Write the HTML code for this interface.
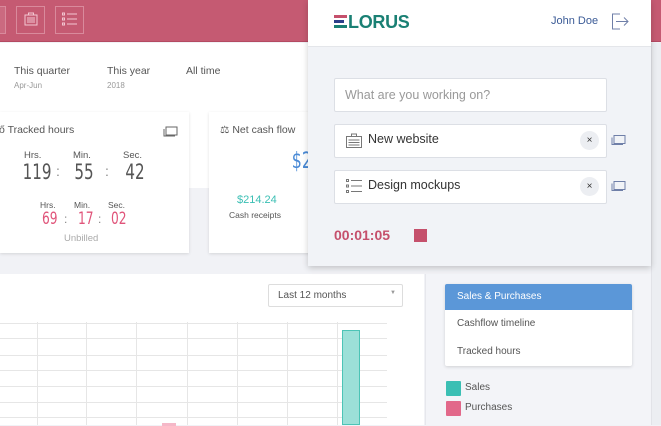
<!DOCTYPE html>
<html><head><meta charset="utf-8"><style>
*{margin:0;padding:0;box-sizing:border-box}
body{width:661px;height:425px;overflow:hidden;position:relative;background:#f1f2f6;font-family:"Liberation Sans",sans-serif;color:#444}
.abs{position:absolute}
.cond{font-family:"DejaVu Sans Condensed","Liberation Sans",sans-serif;display:inline-block;transform:scaleX(.8)}
</style></head><body>
<div class="abs" style="left:0;top:0;width:661px;height:42px;background:#c55a72;border-bottom:1px solid #b44a62"></div>
<div class="abs" style="left:0;top:6px;width:6px;height:28px;border:1px solid #d98a9c;border-left:none;background:#cb6a80"></div>
<div class="abs" style="left:16px;top:6px;width:29px;height:28px;border:1px solid #d98a9c"></div>
<svg class="abs" style="left:23px;top:11px" width="16" height="16" viewBox="0 0 16 16" fill="none" stroke="#f2c7d1" stroke-width="1"><rect x="2" y="4" width="12" height="10"/><rect x="5.5" y="2" width="5" height="2"/><path d="M4 7h8M4 9h8M4 11h8"/></svg>
<div class="abs" style="left:55px;top:6px;width:29px;height:28px;border:1px solid #d98a9c"></div>
<svg class="abs" style="left:61px;top:11px" width="18" height="16" viewBox="0 0 18 16" fill="none" stroke="#f2c7d1" stroke-width="1"><rect x="1.5" y="2" width="2" height="2"/><rect x="1.5" y="7" width="2" height="2"/><rect x="1.5" y="12" width="2" height="2"/><path d="M6 3h10M6 8h10M6 13h10"/></svg>
<div class="abs" style="left:0;top:43px;width:308px;height:145px;background:#fff"></div>
<div class="abs" style="left:14px;top:65px;font-size:10.5px;color:#555">This quarter</div>
<div class="abs" style="left:14px;top:81px;font-size:8px;color:#999">Apr-Jun</div>
<div class="abs" style="left:107px;top:65px;font-size:10.5px;color:#555">This year</div>
<div class="abs" style="left:107px;top:81px;font-size:8px;color:#999">2018</div>
<div class="abs" style="left:186px;top:65px;font-size:10.5px;color:#555">All time</div>
<div class="abs" style="left:0;top:112px;width:189px;height:141px;background:#fff;box-shadow:0 1px 3px rgba(0,0,0,.12)"></div>
<div class="abs" style="left:-1px;top:124px;font-size:10.5px;color:#555">ő Tracked hours</div>
<svg class="abs" style="left:163px;top:125px" width="16" height="12" viewBox="0 0 16 12" fill="none" stroke="#666" stroke-width="1"><rect x="3" y="2" width="11" height="8"/><path d="M1 4v7h11"/></svg>
<div class="abs" style="left:24px;top:150px;font-size:9.5px;color:#555">Hrs.</div>
<div class="abs" style="left:73px;top:150px;font-size:9.5px;color:#555">Min.</div>
<div class="abs" style="left:123px;top:150px;font-size:9.5px;color:#555">Sec.</div>
<div class="abs" style="left:19px;top:160px;font-size:21px;color:#555"><span class="cond">119</span></div>
<div class="abs" style="left:56px;top:163px;font-size:14px;color:#888">:</div>
<div class="abs" style="left:72px;top:160px;font-size:21px;color:#555"><span class="cond">55</span></div>
<div class="abs" style="left:105px;top:163px;font-size:14px;color:#888">:</div>
<div class="abs" style="left:123px;top:160px;font-size:21px;color:#555"><span class="cond">42</span></div>
<div class="abs" style="left:40px;top:200px;font-size:8.5px;color:#555">Hrs.</div>
<div class="abs" style="left:74px;top:200px;font-size:8.5px;color:#555">Min.</div>
<div class="abs" style="left:108px;top:200px;font-size:8.5px;color:#555">Sec.</div>
<div class="abs" style="left:40px;top:209px;font-size:17px;color:#e0547a"><span class="cond">69</span></div>
<div class="abs" style="left:64px;top:212px;font-size:12px;color:#888">:</div>
<div class="abs" style="left:76px;top:209px;font-size:17px;color:#e0547a"><span class="cond">17</span></div>
<div class="abs" style="left:98px;top:212px;font-size:12px;color:#888">:</div>
<div class="abs" style="left:109px;top:209px;font-size:17px;color:#e0547a"><span class="cond">02</span></div>
<div class="abs" style="left:64px;top:233px;font-size:9.5px;color:#aaa">Unbilled</div>
<div class="abs" style="left:209px;top:112px;width:110px;height:141px;background:#fff;box-shadow:0 1px 3px rgba(0,0,0,.12)"></div>
<div class="abs" style="left:220px;top:124px;font-size:10.5px;color:#555">⚖ Net cash flow</div>
<div class="abs" style="left:288px;top:148px;font-size:22px;color:#4a8ad6"><span class="cond">$21</span></div>
<div class="abs" style="left:237px;top:194px;font-size:11px;color:#3bbfb4">$214.24</div>
<div class="abs" style="left:229px;top:210px;font-size:8.5px;color:#555">Cash receipts</div>
<div class="abs" style="left:0;top:274px;width:424px;height:151px;background:#fff"></div>
<div class="abs" style="left:268px;top:284px;width:135px;height:23px;border:1px solid #ddd;border-radius:2px;background:#fff;font-size:10px;color:#555;padding:5px 0 0 9px">Last 12 months<span style="position:absolute;right:6px;top:5px;font-size:6px;color:#999">▼</span></div>
<svg class="abs" style="left:0;top:322px" width="390" height="103">
<g stroke="#e6e6e6" stroke-width="1">
<path d="M0 1.5H387M0 16.5H387M0 33.5H387M0 48.5H387M0 64.5H387M0 80.5H387M0 95.5H387"/>
<path d="M37.5 0V103M86.5 0V103M136.5 0V103M187.5 0V103M237.5 0V103M287.5 0V103M337.5 0V103"/>
</g></svg>
<div class="abs" style="left:342px;top:330px;width:18px;height:95px;background:#9ce0d8;border:1px solid #4cc4b6"></div>
<div class="abs" style="left:162px;top:423px;width:14px;height:3px;background:#f5b8c8"></div>
<div class="abs" style="left:425px;top:274px;width:226px;height:151px;background:#f3f4f8;border-left:1px solid #e6e7ec"></div>
<div class="abs" style="left:651px;top:43px;width:10px;height:382px;background:#eceef2;border-left:1px solid #e2e3e8"></div>
<div class="abs" style="left:445px;top:284px;width:187px;height:82px;background:#fff;border-radius:2px;box-shadow:0 1px 3px rgba(0,0,0,.15)"></div>
<div class="abs" style="left:445px;top:284px;width:187px;height:26px;background:#5b97d8;border-radius:2px 2px 0 0;color:#fff;font-size:10px;padding:7px 0 0 12px">Sales &amp; Purchases</div>
<div class="abs" style="left:457px;top:318px;font-size:10px;color:#555">Cashflow timeline</div>
<div class="abs" style="left:457px;top:346px;font-size:10px;color:#555">Tracked hours</div>
<div class="abs" style="left:446px;top:381px;width:15px;height:15px;background:#3bbfb4;border-radius:1px"></div>
<div class="abs" style="left:465px;top:382px;font-size:10px;color:#555">Sales</div>
<div class="abs" style="left:446px;top:401px;width:15px;height:15px;background:#e2688a;border-radius:1px"></div>
<div class="abs" style="left:465px;top:402px;font-size:10px;color:#555">Purchases</div>
<div class="abs" style="left:308px;top:0;width:343px;height:266px;background:#f1f3f7;box-shadow:0 2px 6px rgba(0,0,0,.2)"></div>
<div class="abs" style="left:308px;top:0;width:343px;height:47px;background:#fff;border-bottom:1px solid #e4e6ea"></div>
<div class="abs" style="left:334px;top:15px;width:13px;height:3px;background:#c5506c"></div>
<div class="abs" style="left:334px;top:20px;width:10px;height:3px;background:#2d3f8a"></div>
<div class="abs" style="left:334px;top:25px;width:13px;height:3px;background:#1a8074"></div>
<div class="abs" style="left:348px;top:12px;font-size:18px;font-weight:bold;color:#1a8074;letter-spacing:-0.3px">LORUS</div>
<div class="abs" style="left:551px;top:15px;font-size:11px;color:#3a5a96">John Doe</div>
<svg class="abs" style="left:611px;top:13px" width="18" height="17" viewBox="0 0 18 17" fill="none" stroke="#6f7fa8" stroke-width="1"><path d="M9 1H1.5v15H9"/><path d="M5 8.5h12M13 4.5l4 4-4 4"/></svg>
<div class="abs" style="left:334px;top:78px;width:273px;height:34px;background:#fff;border:1px solid #dcdfe5;border-radius:2px;font-size:12.5px;color:#999;padding:9px 0 0 10px">What are you working on?</div>
<div class="abs" style="left:334px;top:124px;width:273px;height:34px;background:#fff;border:1px solid #dcdfe5;border-radius:2px"></div>
<svg class="abs" style="left:345px;top:132px" width="18" height="17" viewBox="0 0 18 17" fill="none" stroke="#777" stroke-width="1"><rect x="1.5" y="4.5" width="15" height="11"/><rect x="6.5" y="2" width="5" height="2.5"/><path d="M3.5 8h11M3.5 10.5h11M3.5 13h11"/></svg>
<div class="abs" style="left:368px;top:132px;font-size:12.5px;color:#333">New website</div>
<div class="abs" style="left:580px;top:131px;width:19px;height:19px;border-radius:50%;background:#eceef2;font-size:10px;color:#333;text-align:center;line-height:19px">×</div>
<svg class="abs" style="left:611px;top:133px" width="16" height="13" viewBox="0 0 16 12" fill="none" stroke="#6f7fa8" stroke-width="1"><rect x="3" y="2" width="11" height="8"/><path d="M1 4v7h11"/></svg>
<div class="abs" style="left:334px;top:170px;width:273px;height:34px;background:#fff;border:1px solid #dcdfe5;border-radius:2px"></div>
<svg class="abs" style="left:345px;top:178px" width="18" height="17" viewBox="0 0 18 17" fill="none" stroke="#777" stroke-width="1"><rect x="1.5" y="1.5" width="2" height="2"/><rect x="1.5" y="7" width="2" height="2"/><rect x="1.5" y="12.5" width="2" height="2"/><path d="M6 2.5h11M6 8h11M6 13.5h11"/></svg>
<div class="abs" style="left:368px;top:178px;font-size:12.5px;color:#333">Design mockups</div>
<div class="abs" style="left:580px;top:177px;width:19px;height:19px;border-radius:50%;background:#eceef2;font-size:10px;color:#333;text-align:center;line-height:19px">×</div>
<svg class="abs" style="left:611px;top:179px" width="16" height="13" viewBox="0 0 16 12" fill="none" stroke="#6f7fa8" stroke-width="1"><rect x="3" y="2" width="11" height="8"/><path d="M1 4v7h11"/></svg>
<div class="abs" style="left:334px;top:227px;font-size:14px;font-weight:bold;color:#c5506c">00:01:05</div>
<div class="abs" style="left:414px;top:229px;width:13px;height:13px;background:#c5506c"></div>
</body></html>
